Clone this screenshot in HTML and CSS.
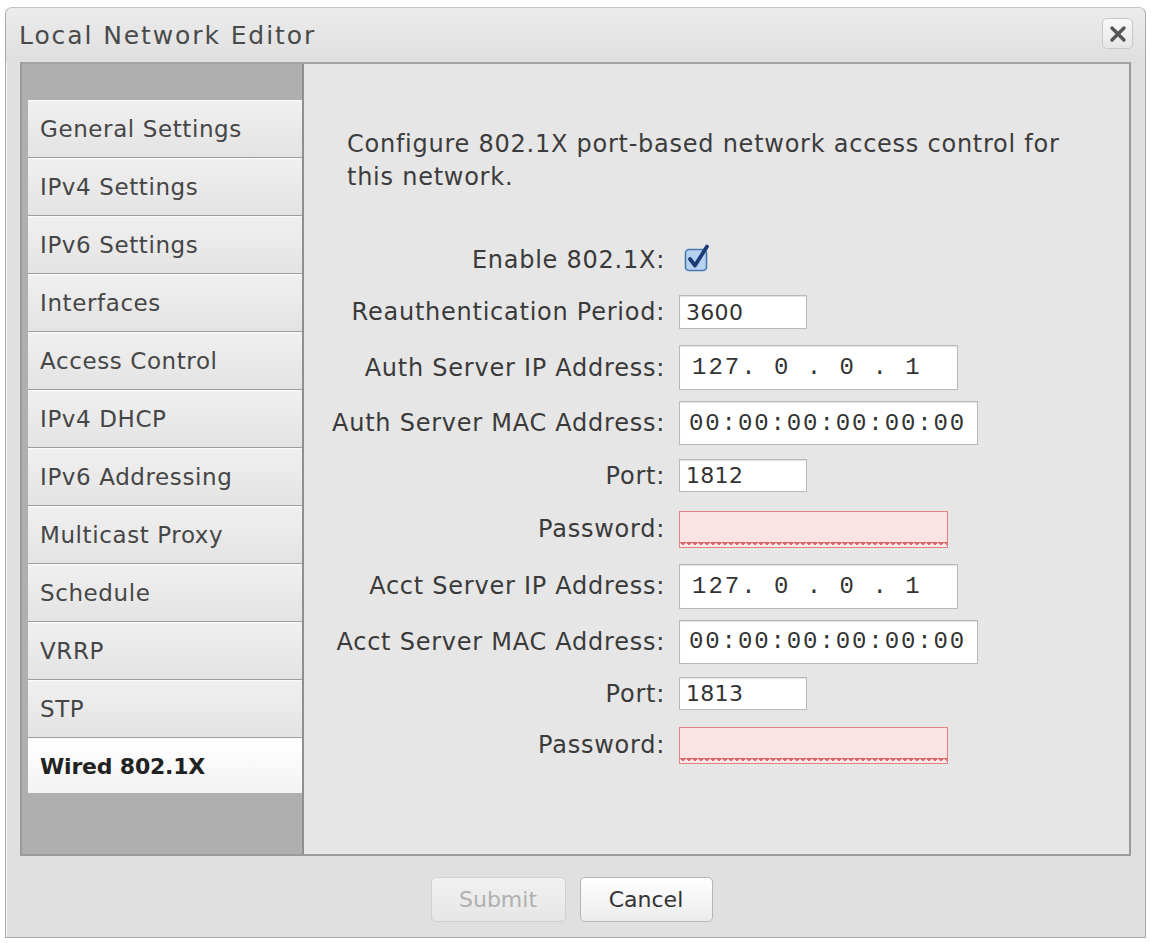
FILE: index.html
```html
<!DOCTYPE html>
<html lang="en">
<head>
<meta charset="utf-8">
<title>Local Network Editor</title>
<link rel="stylesheet" href="styles.css">
</head>
<body>
<div class="dialog">
  <div class="titlebar">
    <span class="title">Local Network Editor</span>
    <button class="close" aria-label="Close">
      <svg width="20" height="20" viewBox="0 0 20 20"><path d="M4 4 L16 16 M16 4 L4 16" stroke="#555" stroke-width="3.4" stroke-linecap="round"/></svg>
    </button>
  </div>
  <div class="panel">
    <nav class="sidebar">
      <div class="tab">General Settings</div>
      <div class="tab">IPv4 Settings</div>
      <div class="tab">IPv6 Settings</div>
      <div class="tab">Interfaces</div>
      <div class="tab">Access Control</div>
      <div class="tab">IPv4 DHCP</div>
      <div class="tab">IPv6 Addressing</div>
      <div class="tab">Multicast Proxy</div>
      <div class="tab">Schedule</div>
      <div class="tab">VRRP</div>
      <div class="tab">STP</div>
      <div class="tab active">Wired 802.1X</div>
    </nav>
    <section class="content">
      <p class="desc">Configure 802.1X port-based network access control for this network.</p>
      <div class="form">
        <label class="lbl">Enable 802.1X:</label>
        <div class="field"><span class="check"><svg width="28" height="28" viewBox="0 0 28 28"><rect x="1.5" y="5.5" width="21" height="21" rx="3.5" fill="#b7d2f0" stroke="#4a78b0" stroke-width="1.6"/><path d="M6 15 L11 21.5 L23 2.5" fill="none" stroke="#1c3c78" stroke-width="3.8" stroke-linejoin="round" stroke-linecap="round"/></svg></span></div>

        <label class="lbl">Reauthentication Period:</label>
        <div class="field"><span class="input short sans">3600</span></div>

        <label class="lbl">Auth Server IP Address:</label>
        <div class="field"><span class="input ip mono">127.&nbsp;0&nbsp;.&nbsp;0&nbsp;.&nbsp;1</span></div>

        <label class="lbl">Auth Server MAC Address:</label>
        <div class="field"><span class="input mac mono">00:00:00:00:00:00</span></div>

        <label class="lbl">Port:</label>
        <div class="field"><span class="input port sans">1812</span></div>

        <label class="lbl">Password:</label>
        <div class="field"><span class="input pw"></span></div>

        <label class="lbl">Acct Server IP Address:</label>
        <div class="field"><span class="input ip mono">127.&nbsp;0&nbsp;.&nbsp;0&nbsp;.&nbsp;1</span></div>

        <label class="lbl">Acct Server MAC Address:</label>
        <div class="field"><span class="input mac mono">00:00:00:00:00:00</span></div>

        <label class="lbl">Port:</label>
        <div class="field"><span class="input port sans">1813</span></div>

        <label class="lbl">Password:</label>
        <div class="field"><span class="input pw"></span></div>
      </div>
    </section>
  </div>
  <div class="footer">
    <button class="btn disabled">Submit</button>
    <button class="btn">Cancel</button>
  </div>
</div>
</body>
</html>
```
FILE: styles.css
```css
* { box-sizing: border-box; }
html, body { margin: 0; padding: 0; background: #ffffff; }
body { font-family: "DejaVu Sans", Verdana, sans-serif; color: #3a3a3a; }

.dialog {
  margin: 7px 0 0 5px;
  width: 1141px;
  height: 931px;
  border: 1px solid #a9a9a9;
  border-top-color: #c4c4c4;
  border-radius: 7px 7px 0 0;
  background: #e0e0e0;
  display: flex;
  flex-direction: column;
  box-shadow: inset 1px 1px 0 #f4f4f4;
}

.titlebar {
  position: relative;
  height: 54px;
  padding-left: 13px;
  display: flex;
  align-items: center;
  background: linear-gradient(#ececec, #dfdfdf);
  border-radius: 7px 7px 0 0;
}
.title {
  font-size: 25px;
  letter-spacing: 1.9px;
  color: #4a4a4a;
  margin-top: 1px;
}
.close {
  position: absolute;
  top: 10px;
  right: 12px;
  width: 31px;
  height: 31px;
  padding: 0;
  border: 1px solid #c8c8c8;
  border-radius: 5px;
  background: linear-gradient(#fafafa, #e6e6e6);
  display: flex;
  align-items: center;
  justify-content: center;
}

.panel {
  margin: 0 14px;
  height: 794px;
  display: flex;
  border: 2px solid #9b9b9b;
  border-top-color: #a3a3a3;
}

.sidebar {
  width: 282px;
  background: #afafaf;
  border-right: 2px solid #8f8f8f;
  padding: 36px 0 0 6px;
  display: flex;
  flex-direction: column;
}
.tab {
  height: 58px;
  padding-left: 12px;
  display: flex;
  align-items: center;
  font-size: 23px;
  letter-spacing: 0.6px;
  color: #464646;
  background: linear-gradient(#f0f0f0, #e3e3e3);
  border-top: 1px solid #fafafa;
  border-bottom: 1px solid #9e9e9e;
}
.tab.active {
  background: linear-gradient(#ffffff, #f3f3f3);
  font-weight: bold;
  font-size: 22px;
  letter-spacing: -0.2px;
  color: #222;
  height: 55px;
  border-bottom: none;
}

.content {
  flex: 1;
  background: #e6e6e6;
  padding: 64px 40px 0 43px;
}
.desc {
  margin: 0;
  font-size: 24px;
  letter-spacing: 0.75px;
  line-height: 33px;
  color: #3c3c3c;
  max-width: 740px;
}

.form {
  margin: 41px 0 0 -43px;
  display: grid;
  grid-template-columns: 361px auto;
  grid-template-rows: 50px 54px 57px 54px 51px 56px 58px 53px 51px 52px;
  column-gap: 14px;
  align-items: center;
}
.lbl {
  text-align: right;
  font-size: 24px;
  letter-spacing: 0.75px;
  color: #3a3a3a;
  white-space: nowrap;
}
.field { display: flex; align-items: center; }
.check { display: block; height: 28px; margin-left: 5px; margin-top: -5px; }

.input {
  display: flex;
  align-items: center;
  background: #ffffff;
  border: 1px solid #b9b9b9;
  box-shadow: inset 0 1px 1px rgba(0,0,0,0.12);
  color: #333;
  white-space: pre;
}
.sans { font-family: "DejaVu Sans", Verdana, sans-serif; font-size: 22px; padding-left: 6px; letter-spacing: 0.3px; }
.mono { font-family: "Liberation Mono", "Courier New", monospace; font-size: 24px; padding-left: 12px; letter-spacing: 2px; }
.short { width: 128px; height: 34px; }
.port { width: 128px; height: 33px; }
.ip { width: 279px; height: 45px; }
.mac { width: 299px; height: 44px; padding-left: 9px; letter-spacing: 1.9px; }
.pw {
  width: 269px;
  height: 37px;
  background: #fde4e4;
  border: 1px solid #e28484;
  box-shadow: none;
  position: relative;
}
.pw::after {
  content: "";
  position: absolute;
  left: 0; right: 0; bottom: 0;
  height: 5px;
  background:
    linear-gradient(135deg, #d95050 30%, transparent 30%) -3px 0 / 6px 5px repeat-x,
    linear-gradient(225deg, #d95050 30%, transparent 30%) -3px 0 / 6px 5px repeat-x;
  opacity: 0.85;
}

.footer {
  flex: 1;
  display: flex;
  justify-content: center;
  align-items: center;
  gap: 14px;
  padding: 6px 8px 0 0;
}
.btn {
  font-family: "DejaVu Sans", Verdana, sans-serif;
  font-size: 22px;
  height: 45px;
  border: 1px solid #b5b5b5;
  border-radius: 5px;
  background: linear-gradient(#ffffff, #ececec);
  color: #333;
  padding: 0;
}
.btn.disabled { width: 135px; color: #b0b0b0; border-color: #cfcfcf; background: linear-gradient(#f1f1f1, #e6e6e6); }
.btn:not(.disabled) { width: 133px; }
```
